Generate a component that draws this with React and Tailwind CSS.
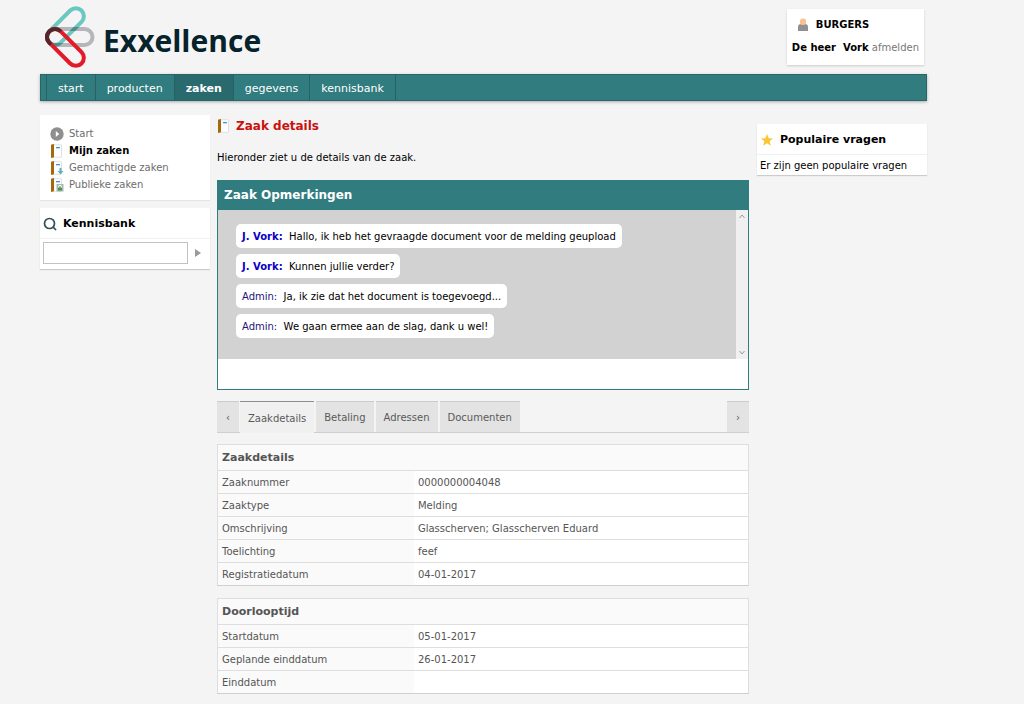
import React from 'react';

const navItems = ['start', 'producten', 'zaken', 'gegevens', 'kennisbank'];

const messages = [
    { author: 'J. Vork:', own: true, text: 'Hallo, ik heb het gevraagde document voor de melding geupload' },
    { author: 'J. Vork:', own: true, text: 'Kunnen jullie verder?' },
    { author: 'Admin:', own: false, text: 'Ja, ik zie dat het document is toegevoegd...' },
    { author: 'Admin:', own: false, text: 'We gaan ermee aan de slag, dank u wel!' },
];

const tabs = ['Zaakdetails', 'Betaling', 'Adressen', 'Documenten'];

const zaakRows = [
    ['Zaaknummer', '0000000004048'],
    ['Zaaktype', 'Melding'],
    ['Omschrijving', 'Glasscherven; Glasscherven Eduard'],
    ['Toelichting', 'feef'],
    ['Registratiedatum', '04-01-2017'],
];

const doorlooptijdRows = [
    ['Startdatum', '05-01-2017'],
    ['Geplande einddatum', '26-01-2017'],
    ['Einddatum', ''],
];

// Three capsules turning around the same left end
const Logo = () => (
    <svg width="50" height="62" viewBox="0 0 50 62" fill="none" strokeWidth="4" className="isolate" aria-hidden="true">
        <rect x="2" y="23" width="45.500" height="16" rx="8" stroke="#b5b6ba" />
        <rect x="2" y="23" width="45.500" height="16" rx="8" stroke="#6cc7c0" transform="rotate(-45 10 31)" className="mix-blend-multiply" />
        <rect x="2" y="23" width="45.500" height="16" rx="8" stroke="#e31b29" transform="rotate(45 10 31)" />
        <path d="M15.700 25.300 A8 8 0 0 0 4.300 36.700 L6 38.400" stroke="#55262c" />
    </svg>
);

const BookIcon = ({ badge }) => (
    <svg width="14" height="14" viewBox="0 0 14 14" className="shrink-0" aria-hidden="true">
        <rect x="1.500" y="0.800" width="10" height="12.400" rx="0.500" fill="#fff" stroke="#ccd4da" strokeWidth="0.700" />
        <path d="M1 0.800 L4 0 V13.200 L1 14 Z" fill="#a5690c" />
        <rect x="6" y="3" width="4" height="1.300" fill="#3b98d4" />
        {badge === 'arrow' && <path d="M9.500 7 H11.500 V10 H13.500 L10.500 13.500 L7.500 10 H9.500 Z" fill="#62b0b8" />}
        {badge === 'lock' && (
            <g>
                <rect x="6.500" y="6" width="7" height="7.500" fill="#a3bcae" />
                <path d="M8.500 10 V8.800 A1.500 1.500 0 0 1 11.500 8.800 V10" fill="none" stroke="#fff" />
                <rect x="8" y="9.500" width="4" height="3" fill="#5b8f5a" />
            </g>
        )}
    </svg>
);

const StartIcon = () => (
    <svg width="14" height="14" viewBox="0 0 14 14" className="shrink-0" aria-hidden="true">
        <circle cx="7" cy="7" r="6.700" fill="#8f8f8f" />
        <path d="M5.800 4 L9.300 7 L5.800 10 Z" fill="#fff" />
    </svg>
);

const menuItems = [
    { label: 'Start', icon: <StartIcon /> },
    { label: 'Mijn zaken', icon: <BookIcon />, active: true },
    { label: 'Gemachtigde zaken', icon: <BookIcon badge="arrow" /> },
    { label: 'Publieke zaken', icon: <BookIcon badge="lock" /> },
];

const DetailTable = ({ title, rows }) => (
    <table className="w-full mb-3 border border-[#dedede] border-b-[#cfcfcf] bg-white text-[#555] border-collapse">
        <thead>
            <tr className="h-[26px] bg-[#fafafa]">
                <th colSpan={2} className="px-1 text-left text-[11px] font-bold">{title}</th>
            </tr>
        </thead>
        <tbody>
            {rows.map(([label, value]) => (
                <tr key={label} className="h-[23px] border-t border-[#dedede]">
                    <th scope="row" className="w-[37%] px-1 pt-px text-left font-normal bg-[#fafafa]">{label}</th>
                    <td className="px-1 pt-px">{value}</td>
                </tr>
            ))}
        </tbody>
    </table>
);

const App = () => {
    return (
        <div className="min-h-screen bg-[#f4f4f4] pl-10 pr-[97px] font-['DejaVu_Sans',Verdana,sans-serif] text-[10px] leading-4 text-black">

            {/* Header */}
            <header className="flex justify-between items-start h-[74px]">
                <a href="#" className="flex items-start gap-2 pl-[5px] pt-1.5">
                    <Logo />
                    <span className="pt-3.5 font-['Open_Sans',sans-serif] text-[30px] leading-[42px] font-bold text-[#06222b]">Exxellence</span>
                </a>
                <div className="mt-[9px] mr-[3px] px-[5px] pt-2 h-14 bg-white shadow-[0_1px_2px_#ccc]">
                    <div className="flex items-center gap-1.5 pl-1 font-bold">
                        <svg width="14" height="16" viewBox="0 0 14 16" aria-hidden="true">
                            <path d="M2 14 V10 Q2 7 5 7 H9 Q12 7 12 10 V14 Z" fill="#8e9093" />
                            <rect x="4" y="1.500" width="6" height="6.500" rx="2.500" fill="#fac090" />
                        </svg>
                        BURGERS
                    </div>
                    <div className="mt-[7px]">
                        <b>De heer&nbsp; Vork</b> <a href="#" className="text-[#777]">afmelden</a>
                    </div>
                </div>
            </header>

            {/* Navigation */}
            <nav className="flex h-[27px] pl-[5px] bg-[#317c7f] border border-[#296669] shadow-[0_1px_3px_#aaa] text-[11px] text-white">
                {navItems.map((item, idx) => (
                    <a
                        key={item}
                        href="#"
                        className={`flex items-center px-[11px] pt-0.5 border-r border-[#276164] ${idx === 0 ? 'border-l' : ''} ${item === 'zaken' ? 'bg-[#286a6d] font-bold' : ''}`}
                    >
                        {item}
                    </a>
                ))}
            </nav>

            <div className="flex items-start gap-[7px] pt-3.5">

                {/* Left column */}
                <aside className="w-[170px] shrink-0">
                    <ul className="px-2.5 pt-2.5 pb-[7px] bg-white shadow-[0_1px_1px_#e4e4e4]">
                        {menuItems.map((item) => (
                            <li key={item.label} className="flex items-center gap-[5px] h-[17px]">
                                {item.icon}
                                <a href="#" className={item.active ? 'font-bold' : 'text-[#6c6c6c]'}>{item.label}</a>
                            </li>
                        ))}
                    </ul>

                    <section className="mt-2 bg-white shadow-[0_1px_1px_#ccc]">
                        <h2 className="flex items-center gap-1.5 h-[31px] px-[3px] pt-0.5 border-b border-[#f0f0f0] text-[11px] font-bold">
                            <svg width="14" height="14" viewBox="0 0 14 14" fill="none" stroke="#2f4f55" strokeWidth="1.700" aria-hidden="true">
                                <circle cx="6.500" cy="6.500" r="5" />
                                <path d="M10 10 L13 13" />
                            </svg>
                            <label htmlFor="zoek">Kennisbank</label>
                        </h2>
                        <form className="flex items-center gap-1.5 px-[3px] pt-[3px] pb-[5px]">
                            <input id="zoek" type="text" className="h-[22px] w-[145px] border border-[#bfc3c3] bg-white px-1" />
                            <button type="button" aria-label="Zoeken" className="w-2 h-4">
                                <svg width="8" height="8" viewBox="0 0 8 8" aria-hidden="true"><path d="M1 0 L7 4 L1 8 Z" fill="#999" /></svg>
                            </button>
                        </form>
                    </section>
                </aside>

                {/* Main column */}
                <main className="flex-1 min-w-0 mr-px">
                    <h1 className="flex items-center gap-[5px] pt-[3px] text-[12px] font-bold text-[#c9120e]">
                        <BookIcon />
                        Zaak details
                    </h1>
                    <p className="mt-4">Hieronder ziet u de details van de zaak.</p>

                    <section className="mt-3.5 h-[210px] border border-[#317c7f] bg-white">
                        <h2 className="h-[29px] px-1.5 bg-[#317c7f] text-[12px] leading-[29px] font-bold text-white">Zaak Opmerkingen</h2>
                        <div className="flex h-[149px]">
                            <ul className="flex-1 flex flex-col items-start gap-1.5 px-[18px] pt-3.5 bg-[#d2d2d2]">
                                {messages.map((msg) => (
                                    <li key={msg.text} className="h-6 px-1.5 pt-px rounded-[5px] bg-white leading-6">
                                        <span className={msg.own ? 'font-bold text-[#0c00c8]' : 'text-[#1c1478]'}>{msg.author}</span>
                                        {'\u00a0 '}{msg.text}
                                    </li>
                                ))}
                            </ul>
                            <div className="flex flex-col justify-between items-center w-3 py-1 bg-[#f0f0f0]">
                                <svg width="6" height="5" viewBox="0 0 6 5" fill="none" stroke="#999" aria-hidden="true"><path d="M0.500 4 L3 1 L5.500 4" /></svg>
                                <svg width="6" height="5" viewBox="0 0 6 5" fill="none" stroke="#999" aria-hidden="true"><path d="M0.500 1 L3 4 L5.500 1" /></svg>
                            </div>
                        </div>
                    </section>

                    {/* Tabs */}
                    <div className="flex h-8 mt-[11px] mb-[11px] border-b border-[#cfcfcf] text-[#5a5a5a]">
                        <button type="button" className="w-[22px] pt-0.5 mr-px border-t border-[#ccc] bg-[#e3e3e3]">‹</button>
                        <div className="flex flex-1 gap-0.5">
                            {tabs.map((tab, idx) => (
                                <button
                                    key={tab}
                                    type="button"
                                    className={`px-2 pt-0.5 border-t ${idx === 0 ? '-mb-px border-[#8d8d8d] bg-[#f0f0f0]' : 'border-[#ccc] bg-[#e3e3e3]'}`}
                                >
                                    {tab}
                                </button>
                            ))}
                        </div>
                        <button type="button" className="w-[22px] pt-0.5 border-t border-[#ccc] bg-[#e3e3e3]">›</button>
                    </div>

                    <DetailTable title="Zaakdetails" rows={zaakRows} />
                    <DetailTable title="Doorlooptijd" rows={doorlooptijdRows} />
                </main>

                {/* Right column */}
                <aside className="w-[170px] shrink-0 mt-[9px] bg-white shadow-[0_1px_1px_#ccc]">
                    <h2 className="flex items-center gap-1.5 h-[31px] px-[3px] pt-0.5 border-b border-[#f0f0f0] text-[11px] font-bold">
                        <svg width="14" height="14" viewBox="0 0 14 14" aria-hidden="true">
                            <path d="M7 1 L8.700 5.200 L13 5.500 L9.700 8.300 L10.800 12.800 L7 10.300 L3.200 12.800 L4.300 8.300 L1 5.500 L5.300 5.200 Z" fill="#f9c637" />
                        </svg>
                        Populaire vragen
                    </h2>
                    <p className="px-[3px] pt-[3px] pb-px">Er zijn geen populaire vragen</p>
                </aside>
            </div>
        </div>
    );
};

export default App;
